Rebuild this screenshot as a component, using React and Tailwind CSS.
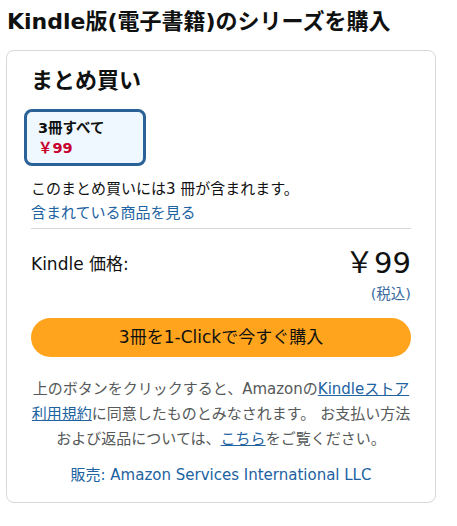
export default function App() {
  return (
    <div className="bg-white min-h-[526px] text-[#0f1111]" style={{ fontFamily: '"DejaVu Sans", "Noto Sans CJK JP", sans-serif' }}>
      <h1 className="pl-[7px] pt-[6px] text-[22px] font-bold leading-[32px]">Kindle版(電子書籍)のシリーズを購入</h1>
      <div className="ml-[6px] mt-[12px] w-[430px] rounded-[8px] border border-[#d5d9d9] px-[24px] pt-[14px] pb-[16px]">
        <h2 className="text-[22px] font-bold leading-[32px]">まとめ買い</h2>
        <div className="-ml-[7px] mt-[12px] w-[122px] h-[57px] rounded-[8px] border-[3px] border-[#2a6196] bg-[#f0f8ff] pl-[11px] pt-[6px]">
          <div className="text-[14.5px] font-bold leading-[20px]">3冊すべて</div>
          <div className="text-[14.5px] font-bold leading-[20px] text-[#c7002e]">￥99</div>
        </div>
        <p className="mt-[12px] text-[15px] leading-[22px]">このまとめ買いには3 冊が含まれます。</p>
        <a className="mt-[2px] block text-[15px] leading-[22px] text-[#2162a1]">含まれている商品を見る</a>
        <div className="mt-[4px] border-t border-[#d5d9d9]" />
        <div className="mt-[14px] flex items-start justify-between">
          <span className="mt-[8px] text-[17px] leading-[26px]">Kindle 価格:</span>
          <div className="flex flex-col items-end">
            <span className="text-[29px] leading-[40px]">￥99</span>
            <span className="mt-[1px] text-[14.5px] leading-[20px] text-[#3b6ba0]">(税込)</span>
          </div>
        </div>
        <button className="mt-[14px] h-[39px] w-full rounded-full bg-[#ffa41c] text-[17px] text-[#0f1111]">3冊を1-Clickで今すぐ購入</button>
        <p className="mt-[20px] text-center text-[15px] leading-[25px] text-[#565959]">
          上のボタンをクリックすると、Amazonの<a className="underline text-[#2162a1]">Kindleストア</a>
          <br />
          <a className="underline text-[#2162a1]">利用規約</a>に同意したものとみなされます。 お支払い方法
          <br />
          および返品については、<a className="underline text-[#2162a1]">こちら</a>をご覧ください。
        </p>
        <p className="mt-[12px] text-center text-[15px] leading-[22px] text-[#2162a1]">販売: Amazon Services International LLC</p>
      </div>
    </div>
  );
}
